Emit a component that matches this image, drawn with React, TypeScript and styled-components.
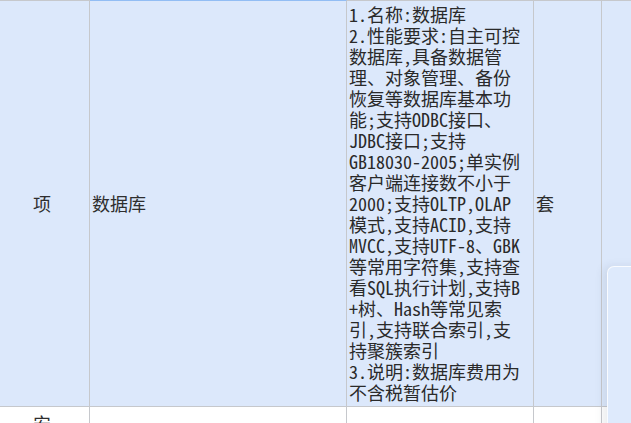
import React from "react";
import styled, { createGlobalStyle } from "styled-components";

const GlobalStyle = createGlobalStyle`
  html, body {
    margin: 0;
    padding: 0;
    background: #ffffff;
    overflow: hidden;
  }
`;

const Sheet = styled.div`
  position: relative;
  width: 631px;
  height: 423px;
  overflow: hidden;
  background: #ffffff;
`;

const Grid = styled.table`
  margin-left: -5px;
  border-collapse: separate;
  border-spacing: 0;
  table-layout: fixed;
  width: 676px;
`;

const Row = styled.tr<{ $selected?: boolean }>`
  background: ${(p) => (p.$selected ? "#dce8fb" : "#ffffff")};
`;

const Cell = styled.td<{ $align?: string; $top?: boolean; $focus?: boolean }>`
  box-sizing: border-box;
  padding: 3px 2px;
  border-right: 1px solid #c6c8cc;
  border-bottom: 1px solid #c6c8cc;
  border-top: ${(p) => (p.$top ? "1px solid #c6c8cc" : "none")};
  vertical-align: ${(p) => (p.$align === "top" ? "top" : "middle")};
  text-align: ${(p) => (p.$align === "center" ? "center" : "left")};
  font-family: "Noto Sans CJK SC", "Noto Sans", sans-serif;
  font-size: 18px;
  line-height: 21px;
  color: #2e2e2e;
  overflow: hidden;
  ${(p) => (p.$focus ? "border-top-color: #92bdf4;" : "")}
`;

const Spec = styled.div`
  font-family: "Noto Sans Mono CJK SC", "Noto Sans CJK SC", "Liberation Mono", monospace;
  font-size: 18px;
  line-height: 21px;
  color: #2a2a2a;
`;

const SpecLine = styled.span`
  display: block;
  white-space: nowrap;
`;

const PeekText = styled.div`
  padding-top: 3px;
  height: 16px;
`;

const SidePanel = styled.div`
  position: absolute;
  left: 607px;
  top: 266px;
  width: 40px;
  height: 200px;
  background: #deeafc;
  border-top-left-radius: 7px;
  border-top: 1px solid rgba(255, 255, 255, 0.8);
  border-left: 1px solid rgba(255, 255, 255, 0.8);
  box-shadow: -4px 0 9px rgba(60, 70, 90, 0.1);
`;

const lines = [
  "1.名称:数据库",
  "2.性能要求:自主可控",
  "数据库,具备数据管",
  "理、对象管理、备份",
  "恢复等数据库基本功",
  "能;支持ODBC接口、",
  "JDBC接口;支持",
  "GB18030-2005;单实例",
  "客户端连接数不小于",
  "2000;支持OLTP,OLAP",
  "模式,支持ACID,支持",
  "MVCC,支持UTF-8、GBK",
  "等常用字符集,支持查",
  "看SQL执行计划,支持B",
  "+树、Hash等常见索",
  "引,支持联合索引,支",
  "持聚簇索引",
  "3.说明:数据库费用为",
  "不含税暂估价",
];

export default function App() {
  return (
    <>
      <GlobalStyle />
      <Sheet>
        <Grid>
          <colgroup>
            <col style={{ width: 95 }} />
            <col style={{ width: 257 }} />
            <col style={{ width: 187 }} />
            <col style={{ width: 68 }} />
            <col style={{ width: 69 }} />
          </colgroup>
          <tbody>
            <Row $selected>
              <Cell $top $align="center">项</Cell>
              <Cell $top $focus>数据库</Cell>
              <Cell $top>
                <Spec>
                  {lines.map((l, i) => (
                    <SpecLine key={i}>{l}</SpecLine>
                  ))}
                </Spec>
              </Cell>
              <Cell $top>套</Cell>
              <Cell $top />
            </Row>
            <Row>
              <Cell $align="center">
                <PeekText>安</PeekText>
              </Cell>
              <Cell />
              <Cell />
              <Cell />
              <Cell />
            </Row>
          </tbody>
        </Grid>
        <SidePanel />
      </Sheet>
    </>
  );
}
